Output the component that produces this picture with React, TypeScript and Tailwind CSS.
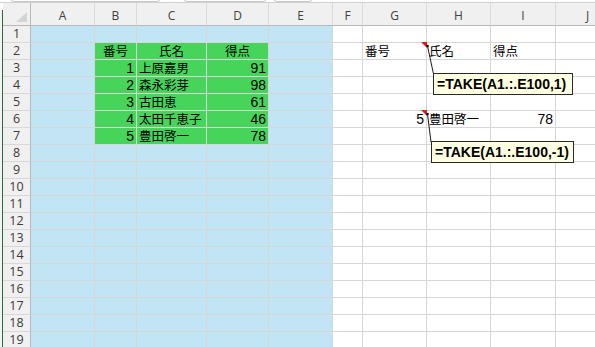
import React from 'react';

type Cell = { t: string; align: 'left' | 'center' | 'right'; kind: 'jp' | 'num' };

const COLS = ['A', 'B', 'C', 'D', 'E', 'F', 'G', 'H', 'I', 'J'];
const ROWS = Array.from({ length: 19 }, (_, i) => i + 1);

const people = [
    ['1', '上原嘉男', '91'],
    ['2', '森永彩芽', '98'],
    ['3', '古田恵', '61'],
    ['4', '太田千恵子', '46'],
    ['5', '豊田啓一', '78'],
];

const cells: Record<string, Cell> = {
    B2: { t: '番号', align: 'center', kind: 'jp' },
    C2: { t: '氏名', align: 'center', kind: 'jp' },
    D2: { t: '得点', align: 'center', kind: 'jp' },
    G2: { t: '番号', align: 'left', kind: 'jp' },
    H2: { t: '氏名', align: 'left', kind: 'jp' },
    I2: { t: '得点', align: 'left', kind: 'jp' },
    G6: { t: '5', align: 'right', kind: 'num' },
    H6: { t: '豊田啓一', align: 'left', kind: 'jp' },
    I6: { t: '78', align: 'right', kind: 'num' },
};
people.forEach(([no, name, score], i) => {
    const r = i + 3;
    cells['B' + r] = { t: no, align: 'right', kind: 'num' };
    cells['C' + r] = { t: name, align: 'left', kind: 'jp' };
    cells['D' + r] = { t: score, align: 'right', kind: 'num' };
});

function fillFor(col: string, row: number) {
    if (['B', 'C', 'D'].includes(col) && row >= 2 && row <= 7) return 'bg-[#47d45a]';
    if (['A', 'B', 'C', 'D', 'E'].includes(col)) return 'bg-[#c1e5f5]';
    return 'bg-white';
}

function DataCell({ col, row }: { col: string; row: number }) {
    const c = cells[col + row];
    const justify = !c ? '' : c.align === 'right' ? 'justify-end' : c.align === 'center' ? 'justify-center' : 'justify-start';
    const font = c?.kind === 'num'
        ? "text-[14px] font-['Liberation_Sans','Noto_Sans_CJK_JP',sans-serif]"
        : "text-[12.5px] font-['Noto_Sans_CJK_JP',sans-serif]";
    return (
        <div className={`h-[17px] border-r border-b border-[#d6d6d6] flex items-center px-[2px] overflow-visible whitespace-nowrap text-black leading-[16px] ${fillFor(col, row)} ${justify} ${font}`}>
            {c?.t}
        </div>
    );
}

function Callout({ text, className }: { text: string; className: string }) {
    return (
        <div className={`absolute h-[22px] bg-[#ffffe1] border border-[#2a2a2a] flex items-center pl-[3px] text-[14px] font-bold text-black font-['Liberation_Sans',sans-serif] whitespace-nowrap ${className}`}>
            {text}
        </div>
    );
}

export default function App() {
    return (
        <div className="relative w-[595px] h-[347px] overflow-hidden bg-white font-['Open_Sans',sans-serif]">
            {/* ribbon bottoms */}
            <div className="h-[3px] border-b border-[#d0d0d0] relative">
                <div className="absolute left-[10px] w-[151px] -top-[4px] h-[6px] rounded-b-[4px] border border-[#c8c8c8] bg-white" />
                <div className="absolute left-[183px] w-[84px] -top-[4px] h-[6px] rounded-b-[4px] border border-[#c8c8c8] bg-white" />
                <div className="absolute left-[273px] w-[40px] -top-[4px] h-[6px] rounded-b-[4px] border border-[#c8c8c8] bg-white" />
            </div>
            <div className="flex">
                <div className="w-[3px] shrink-0 bg-[#f3f3f3] border-r border-[#2c6a40] mt-[7px]" />
                <div className="grid grid-cols-[28px_64px_42px_70px_62px_64px_30px_64px_64px_65px_64px]">
                    {/* column headers */}
                    <div className="h-[23px] bg-[#f0f0f0] border-b border-r border-[#b8b8b8] relative">
                        <div className="absolute right-[3px] bottom-[3px] w-0 h-0 border-l-[11px] border-l-transparent border-b-[10px] border-b-[#d4d4d4]" />
                    </div>
                    {COLS.map(c => (
                        <div key={c} className="h-[23px] bg-[#f0f0f0] border-b border-b-[#b8b8b8] border-r border-r-[#dadada] flex items-center justify-center pt-[3px] text-[12px] text-[#404040]">
                            {c}
                        </div>
                    ))}
                    {ROWS.map(r => (
                        <React.Fragment key={r}>
                            <div className="h-[17px] bg-[#f0f0f0] border-r border-r-[#b8b8b8] border-b border-b-[#d8d8d8] flex items-center justify-center text-[12.5px] leading-none text-[#3a3a3a]">
                                {r}
                            </div>
                            {COLS.map(c => <DataCell key={c} col={c} row={r} />)}
                        </React.Fragment>
                    ))}
                </div>
            </div>

            {/* note indicators and leader lines */}
            <svg className="absolute inset-0 pointer-events-none" width="595" height="347">
                <polygon points="421,42 427,42 427,48" fill="#e8171b" />
                <line x1="427.5" y1="46" x2="433.5" y2="74" stroke="#1a1a1a" strokeWidth="1" />
                <circle cx="427.5" cy="46" r="1.3" fill="#000" />
                <polygon points="421,110 427,110 427,116" fill="#e8171b" />
                <line x1="427.5" y1="114" x2="431" y2="142" stroke="#1a1a1a" strokeWidth="1" />
                <circle cx="427.5" cy="114" r="1.3" fill="#000" />
            </svg>
            <Callout text="=TAKE(A1.:.E100,1)" className="left-[433px] top-[73px] w-[140px]" />
            <Callout text="=TAKE(A1.:.E100,-1)" className="left-[431px] top-[141px] w-[143px]" />
        </div>
    );
}
